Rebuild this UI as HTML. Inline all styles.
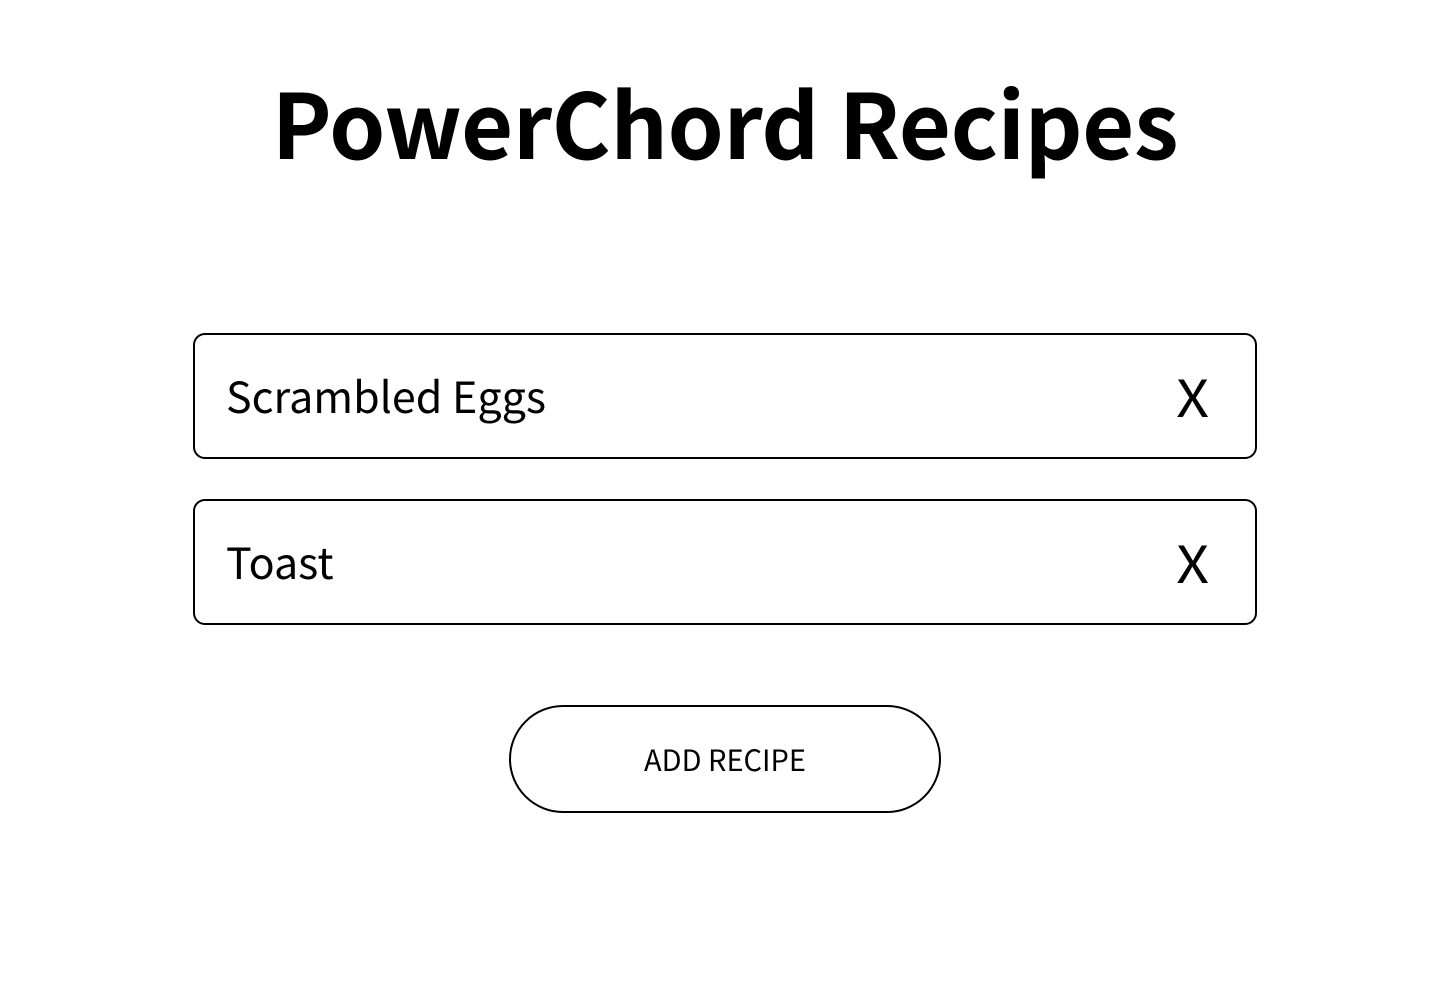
<!DOCTYPE html>
<html><head><meta charset="utf-8"><style>
html,body{margin:0;padding:0;background:#fff;width:1440px;height:1008px;overflow:hidden;font-family:"Noto Sans CJK SC","Liberation Sans",sans-serif;color:#000}
h1{position:absolute;left:0;width:1450px;top:55px;margin:0;text-align:center;font-size:90px;font-weight:700;line-height:130px;letter-spacing:-0.4px}
.box{position:absolute;left:193px;width:1060px;height:122px;border:2px solid #000;border-radius:12px;display:flex;align-items:center;justify-content:space-between;box-sizing:content-box}
.box span{font-size:43px;line-height:60px}
.box .t{margin-left:31px;margin-top:-2px}
.box .x{margin-right:48px;font-size:51px;transform:scaleX(1.12);margin-top:-2px}
.btn{position:absolute;left:509px;top:705px;width:428px;height:104px;border:2px solid #000;border-radius:54px;display:flex;align-items:center;justify-content:center;font-size:29px;line-height:40px}
</style></head><body>
<h1>PowerChord Recipes</h1>
<div class="box" style="top:333px"><span class="t">Scrambled Eggs</span><span class="x">X</span></div>
<div class="box" style="top:499px"><span class="t">Toast</span><span class="x">X</span></div>
<div class="btn">ADD RECIPE</div>
</body></html>
